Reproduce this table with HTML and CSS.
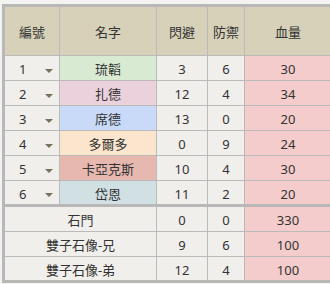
FILE: index.html
```html
<!DOCTYPE html>
<html lang="zh-Hant">
<head>
<meta charset="utf-8">
<link rel="stylesheet" href="styles.css">
</head>
<body>
<table class="party">
  <colgroup>
    <col class="c-no"><col class="c-name"><col class="c-eva"><col class="c-def"><col class="c-hp">
  </colgroup>
  <thead>
    <tr><th>編號</th><th>名字</th><th>閃避</th><th>防禦</th><th>血量</th></tr>
  </thead>
  <tbody class="members">
    <tr><td class="sel"><span>1</span><i class="caret"></i></td><td class="n-green">琉韜</td><td>3</td><td>6</td><td class="hp">30</td></tr>
    <tr><td class="sel"><span>2</span><i class="caret"></i></td><td class="n-pink">扎德</td><td>12</td><td>4</td><td class="hp">34</td></tr>
    <tr><td class="sel"><span>3</span><i class="caret"></i></td><td class="n-blue">席德</td><td>13</td><td>0</td><td class="hp">20</td></tr>
    <tr><td class="sel"><span>4</span><i class="caret"></i></td><td class="n-orange">多爾多</td><td>0</td><td>9</td><td class="hp">24</td></tr>
    <tr><td class="sel"><span>5</span><i class="caret"></i></td><td class="n-red">卡亞克斯</td><td>10</td><td>4</td><td class="hp">30</td></tr>
    <tr class="last"><td class="sel"><span>6</span><i class="caret"></i></td><td class="n-cyan">岱恩</td><td>11</td><td>2</td><td class="hp">20</td></tr>
  </tbody>
  <tbody class="enemies">
    <tr><td colspan="2">石門</td><td>0</td><td>0</td><td class="hp">330</td></tr>
    <tr><td colspan="2">雙子石像-兄</td><td>9</td><td>6</td><td class="hp">100</td></tr>
    <tr class="last"><td colspan="2">雙子石像-弟</td><td>12</td><td>4</td><td class="hp">100</td></tr>
  </tbody>
</table>
</body>
</html>
```

FILE: styles.css
```css
html, body {
  margin: 0;
  padding: 0;
  background: #f3f3f1;
  overflow: hidden;
}

.party {
  margin: 4px 0 0 2px;
  border-collapse: separate;
  border-spacing: 0;
  border: 3px solid #b8b8b8;
  table-layout: fixed;
  width: 332px;
  font-family: "Noto Sans", "Noto Sans CJK TC", sans-serif;
  font-size: 13px;
  color: #333;
  background: #f0efeb;
}

.c-no { width: 55px; }
.c-name { width: 97px; }
.c-eva { width: 51px; }
.c-def { width: 37px; }
.c-hp { width: 86px; }

.party th,
.party td {
  box-sizing: border-box;
  padding: 0;
  text-align: center;
  vertical-align: middle;
  border-right: 1px solid #bababa;
  border-bottom: 1px solid #bababa;
  line-height: 16px;
}

.party th:last-child,
.party td:last-child {
  border-right: none;
}

.party th {
  height: 49px;
  background: #d6d1b8;
  font-weight: normal;
  padding-top: 2px;
}

.party td {
  height: 25px;
  padding-top: 2px;
}

.members tr.last td {
  border-bottom: 3px solid #b8b8b8;
  height: 26px;
}

.enemies tr.last td {
  border-bottom: none;
  height: 23px;
}

.party td.sel {
  text-align: left;
  padding-left: 14px;
}

.sel span {
  display: inline-block;
  width: 26px;
}

.caret {
  display: inline-block;
  width: 0;
  height: 0;
  border-left: 4px solid transparent;
  border-right: 4px solid transparent;
  border-top: 4px solid #7a705e;
  vertical-align: middle;
}

.hp { background: #f4cccc; }
.n-green { background: #d9ead3; }
.n-pink { background: #ead1dc; }
.n-blue { background: #c9daf8; }
.n-orange { background: #fce5cd; }
.n-red { background: #e6b8af; }
.n-cyan { background: #d0e0e3; }
```
